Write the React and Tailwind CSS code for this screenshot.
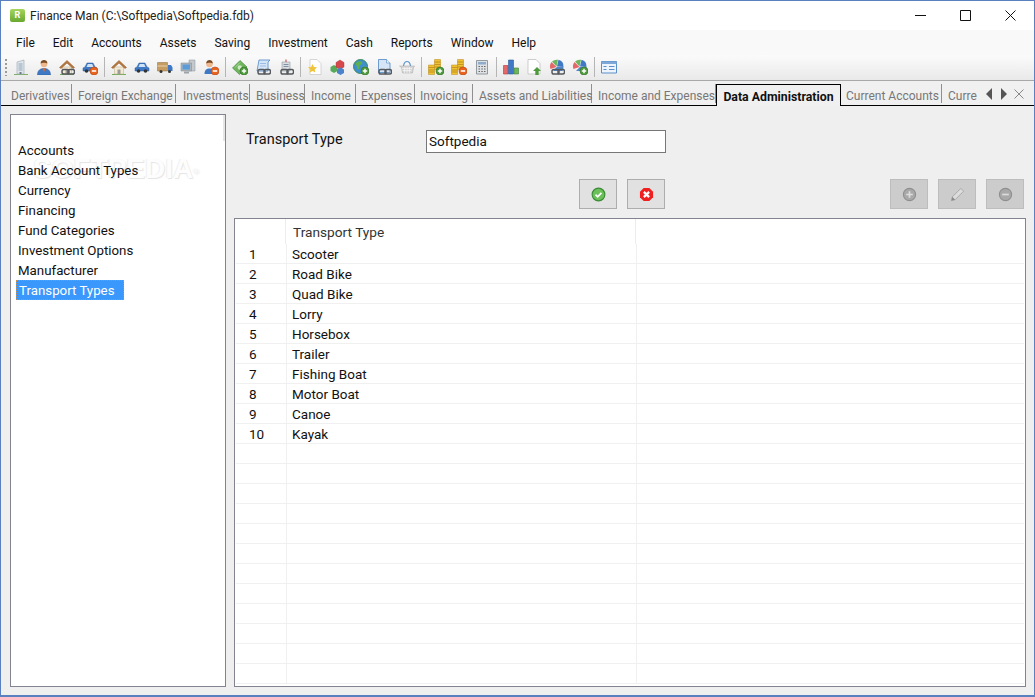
const uiFont = "font-['Roboto',sans-serif]";

const Plus = () => (
  <g>
    <circle cx="12" cy="12" r="4" fill="#4f9a3c" stroke="#2f6f25" strokeWidth="0.6" />
    <path d="M12 9.8v4.4M9.8 12h4.4" stroke="#fff" strokeWidth="1.4" />
  </g>
)

const Minus = () => (
  <g>
    <circle cx="12" cy="12" r="4" fill="#e8641f" stroke="#b84510" strokeWidth="0.6" />
    <path d="M9.8 12h4.4" stroke="#fff" strokeWidth="1.6" />
  </g>
)

const Chain = () => (
  <g fill="none" stroke="#55595e" strokeWidth="1.5">
    <rect x="3" y="10.5" width="7" height="4.500" rx="1.800" />
    <rect x="9" y="10.5" width="6.500" height="4.500" rx="1.800" />
  </g>
)

const Building = () => (
  <g>
    <path d="M1 15h14v1H1z" fill="#7fb069" />
    <path d="M4 3l7-2v14H4z" fill="#dfe5ea" stroke="#98a4af" strokeWidth="0.6" />
    <path d="M5.5 5h4M5.5 7h4M5.5 9h4M5.5 11h4" stroke="#8fa6bd" />
    <path d="M6.5 13h2v2h-2z" fill="#6f7d8a" />
  </g>
)

const Person = () => (
  <g>
    <path d="M1.5 16c0-5 3-6.5 6.5-6.500s6.500 1.500 6.500 6.500z" fill="#3f78c4" stroke="#2c5a9a" strokeWidth="0.5" />
    <path d="M6.500 9.500L8 13l1.500-3.500z" fill="#e8641f" />
    <circle cx="8" cy="5" r="3.300" fill="#eeb78c" />
    <path d="M4.600 4.500C4.600 1.800 6.500 1 8 1s3.400.8 3.400 3.500C10 3.500 6 3.500 4.600 4.500z" fill="#7b4a22" />
  </g>
)

const SmallPerson = () => (
  <g>
    <path d="M1.500 15c0-4 2-5.500 5-5.500s5 1.500 5 5.500z" fill="#3f78c4" />
    <circle cx="6.500" cy="5" r="3.300" fill="#eeb78c" />
    <path d="M3.200 4.500C3.200 2 5 1 6.500 1s3.300 1 3.300 3.500C8.500 3.500 4.500 3.500 3.200 4.500z" fill="#7b4a22" />
  </g>
)

const House = () => (
  <g>
    <path d="M1 15h14v1H1z" fill="#74ad58" />
    <path d="M3.500 8v7h9V8z" fill="#f4ead2" stroke="#b8a888" strokeWidth="0.5" />
    <path d="M0.500 8.500L8 1.500l7.500 7-1.500 1L8 4 2 9.500z" fill="#b9783c" stroke="#8a5526" strokeWidth="0.5" />
    <path d="M6.500 10.500h3V15h-3z" fill="#9c9c9c" />
  </g>
)

const Car = () => (
  <g>
    <path d="M1 12V9l2-1 2-4h6l2 4 2 1v3z" fill="#3f78c4" stroke="#2c5a9a" strokeWidth="0.5" />
    <path d="M5.800 5h4.400l1.300 3H4.500z" fill="#cfe2f5" />
    <circle cx="4.500" cy="12" r="1.800" fill="#333" />
    <circle cx="11.500" cy="12" r="1.800" fill="#333" />
  </g>
)

const Truck = () => (
  <g>
    <path d="M0.500 3.500h10v8.500h-10z" fill="#c69c62" stroke="#8d6c3c" strokeWidth="0.5" />
    <path d="M0.500 7h10" stroke="#e9d3a8" />
    <path d="M11 6h3l1.500 2.500V12H11z" fill="#3f78c4" />
    <circle cx="4" cy="12.500" r="1.500" fill="#333" />
    <circle cx="12.500" cy="12.500" r="1.500" fill="#333" />
  </g>
)

const Computer = () => (
  <g>
    <path d="M9 1h6v11H9z" fill="#c4c9ce" stroke="#8d9399" strokeWidth="0.5" />
    <path d="M1 4h10.500v8H1z" fill="#aeb6bd" stroke="#7f868d" strokeWidth="0.5" />
    <path d="M2.500 5.500H10v5H2.500z" fill="#5b9bd8" />
    <path d="M4 12.500h5v2H4z" fill="#9ca3a9" />
  </g>
)

const Money = () => (
  <g>
    <path d="M0.500 9L8 1.500 15 8 7.500 15.500z" fill="#6eb55c" stroke="#3c8136" strokeWidth="0.6" />
    <circle cx="7.800" cy="8.500" r="2.200" fill="#cfe9c4" />
    <path d="M3 8.500l5-5" stroke="#a9dd98" />
  </g>
)

const Scroll = () => (
  <g>
    <path d="M4 1h11l-2 2v9H2z" fill="#d5e5f7" stroke="#4e86c6" strokeWidth="0.8" />
    <path d="M5 4.500h6M5 7h6" stroke="#9abde4" />
  </g>
)

const Printer = () => (
  <g>
    <path d="M7.500 0.500h1V3h-1z" fill="#c33" />
    <path d="M4 3h8v9H4z" fill="#d9dde1" stroke="#7e858c" strokeWidth="0.5" />
    <path d="M5.500 5.500h5M5.500 7.500h5" stroke="#7e92a8" />
  </g>
)

const DocStar = () => (
  <g>
    <path d="M3 0.500h7l4 4v11H3z" fill="#fff" stroke="#c5c5c5" strokeWidth="0.7" />
    <path d="M5.500 5l1.400 2.900 3.100.4-2.300 2.100.6 3.100-2.800-1.500-2.800 1.500.6-3.100L1 8.300l3.100-.4z" fill="#f0c43a" />
  </g>
)

const Cubes = () => (
  <g>
    <path d="M0.500 8L4 6l3.500 2v4L4 14l-3.500-2z" fill="#59a95a" />
    <path d="M6 3.500L10 1l4 2.500V8l-4 2.500L6 8z" fill="#d6484c" stroke="#a92f33" strokeWidth="0.4" />
    <path d="M7 10.500l3.500-2 3.500 2v3.500L10.500 16 7 14z" fill="#4a83c9" />
  </g>
)

const Globe = () => (
  <g>
    <circle cx="7.500" cy="7.500" r="7" fill="#3f8fd0" stroke="#3a8a56" strokeWidth="1" />
    <path d="M3 4c2-2 5-2 6-1s-1 3-2 3 0 3-1 4-2 0-2-2-2-2-1-4z" fill="#5cb14d" />
    <path d="M10 8l3-1v3l-2 2z" fill="#5cb14d" />
  </g>
)

const DocBlue = () => (
  <g>
    <path d="M2.500 0.500h8l3.500 3.500v9.500H2.500z" fill="#d5e5f7" stroke="#4e86c6" strokeWidth="0.8" />
    <path d="M10.500 0.500V4H14" fill="#f3f8fd" stroke="#4e86c6" strokeWidth="0.6" />
  </g>
)

const Basket = () => (
  <g>
    <path d="M4.500 7C5 3.500 6.500 2.500 8 2.500S11 3.500 11.500 7" fill="none" stroke="#5d93cf" strokeWidth="1.200" />
    <path d="M0.500 7h15l-1 1.500-1 5.500h-10l-1-5.500z" fill="#d6d6d6" stroke="#a4a4a4" strokeWidth="0.5" />
    <path d="M3 9.500h10M3.500 11.500h9M5.500 8v6M8 8v6M10.500 8v6" stroke="#f5f5f5" strokeWidth="0.7" />
  </g>
)

const Coins = () => (
  <g fill="#f0c232" stroke="#b9891a" strokeWidth="0.5">
    <path d="M6.500 0.500h6v2.500h-6zM6.500 3h6v2.500h-6zM6.500 5.500h6v2.500h-6zM6.500 8h6v2.500h-6z" />
    <path d="M0.500 6h6v2.500h-6zM0.500 8.500h6v2.500h-6zM0.500 11h6v2h-6zM0.500 13h6v2.500h-6z" />
  </g>
)

const Calc = () => (
  <g>
    <path d="M2.500 1.500h11v13.500h-11z" fill="#dfe2e5" stroke="#7e858c" strokeWidth="0.8" />
    <path d="M4 3h8v2.500H4z" fill="#8faccb" />
    <path d="M4.500 7.500h1.500M7.300 7.500h1.500M10 7.500h1.500M4.500 10h1.500M7.300 10h1.500M10 10h1.500M4.500 12.500h1.500M7.300 12.500h1.500M10 12.500h1.500" stroke="#666" />
  </g>
)

const Bars = () => (
  <g strokeWidth="0.6">
    <path d="M0.500 6.500h4.500V15H0.500z" fill="#e4686a" stroke="#b33" />
    <path d="M5.500 1h5v14h-5z" fill="#3f78c4" stroke="#2c5a9a" />
    <path d="M11 9h4.500v6H11z" fill="#6eb55c" stroke="#3c8136" />
  </g>
)

const DocUp = () => (
  <g>
    <path d="M2 0.500h8l4 4v10.500H2z" fill="#fff" stroke="#c0c0c0" strokeWidth="0.8" />
    <path d="M11 8l4 4h-2.300v4h-3.400v-4H7z" fill="#4f9a3c" />
  </g>
)

const Pie = () => (
  <g>
    <path d="M7.500 7.500L3 2.500A7 7 0 0 1 9 0.800z" fill="#6eb55c" />
    <path d="M8 7.500L9.500 0.800A7 7 0 0 1 14.500 8z" fill="#3f78c4" />
    <path d="M7.500 8L1.500 10A7 7 0 0 1 2.500 3z" fill="#e4686a" />
    <path d="M7.800 8h6.700a7 7 0 0 1-1 4H4z" fill="#4f86c8" />
  </g>
)

const FormIcon = () => (
  <g>
    <path d="M0.500 2.500h15v11.500H0.500z" fill="#eef4fb" stroke="#5b8fc9" />
    <path d="M0.500 2.500h15v2.500H0.500z" fill="#7fa8d8" />
    <path d="M2.500 7.500h3M2.500 10.500h3M8 7.500h5.500M8 10.500h5.500" stroke="#5b8fc9" />
  </g>
)

const toolbar = [
  [[Building]],
  [[Person]],
  [[House], [Chain]],
  [[Car], [Minus]],
  "sep",
  [[House]],
  [[Car]],
  [[Truck]],
  [[Computer]],
  [[SmallPerson], [Minus]],
  "sep",
  [[Money], [Plus]],
  [[Scroll], [Chain]],
  [[Printer], [Chain]],
  "sep",
  [[DocStar]],
  [[Cubes]],
  [[Globe], [Plus]],
  [[DocBlue], [Chain]],
  [[Basket]],
  "sep",
  [[Coins], [Plus]],
  [[Coins], [Minus]],
  [[Calc]],
  "sep",
  [[Bars]],
  [[DocUp]],
  [[Pie], [Chain]],
  [[Pie], [Plus]],
  "sep",
  [[FormIcon]],
]

const ToolbarIcon = ({ parts }) => (
  <div className="w-[23px] flex justify-center">
    <svg width="16" height="16" viewBox="0 0 16 16">
      {parts.map(([Part], i) => <Part key={i} />)}
    </svg>
  </div>
)

const menus = ["File", "Edit", "Accounts", "Assets", "Saving", "Investment", "Cash", "Reports", "Window", "Help"]

const tabs = [
  ["Derivatives", "w-[68px] pl-[7px]"],
  ["Foreign Exchange", "w-[104px] pl-[6px]"],
  ["Investments", "w-[74px] pl-[7px]"],
  ["Business", "w-[55px] pl-[6px]"],
  ["Income", "w-[51px] pl-[6px]"],
  ["Expenses", "w-[59px] pl-[5px]"],
  ["Invoicing", "w-[58px] pl-[5px]"],
  ["Assets and Liabilities", "w-[119px] pl-[6px]"],
  ["Income and Expenses", "w-[124px] pl-[6px]"],
]

const listItems = ["Accounts", "Bank Account Types", "Currency", "Financing", "Fund Categories", "Investment Options", "Manufacturer"]

const rows = ["Scooter", "Road Bike", "Quad Bike", "Lorry", "Horsebox", "Trailer", "Fishing Boat", "Motor Boat", "Canoe", "Kayak"]
const blankRows = Array.from({ length: 12 })

const ActionButton = ({ disabled, children }) => (
  <button className={`w-[38px] h-[30px] flex items-center justify-center border ${disabled ? "bg-[#cccccc] border-[#bdbdbd]" : "bg-[#e1e1e1] border-[#adadad]"}`}>
    <svg width="15" height="15" viewBox="0 0 16 16">{children}</svg>
  </button>
)

const GridRow = ({ num, name }) => (
  <div className="h-[20px] flex border-b border-[#f0f0f0] text-[13.500px] leading-[21px] text-[#111]">
    <div className="w-[51px] pl-[13px] border-r border-[#f0f0f0]">{num}</div>
    <div className="w-[350px] pl-[5px] border-r border-[#f0f0f0]">{name}</div>
  </div>
)

const App = () => {
  return (
    <div className={`${uiFont} w-[1035px] h-[697px] flex flex-col overflow-hidden bg-[#efefef] border-x border-b-2 border-t border-[#5a80c0] text-[#111]`}>
      {/* title bar */}
      <div className="h-[29px] shrink-0 bg-white flex items-center pl-[9px] pr-[18px]">
        <div className="w-[15px] h-[13px] rounded-[2px] bg-gradient-to-b from-[#a6d65a] to-[#69a82f] flex items-center justify-center text-[9px] font-bold leading-none text-white">R</div>
        <div className="ml-[5px] text-[12px] text-[#222]">Finance Man (C:\Softpedia\Softpedia.fdb)</div>
        <div className="ml-auto flex items-center gap-[34px]">
          <svg width="11" height="11" viewBox="0 0 11 11"><path d="M0 5.500h11" stroke="#111" /></svg>
          <svg width="11" height="11" viewBox="0 0 11 11"><path d="M.5.500h10v10H.5z" fill="none" stroke="#111" /></svg>
          <svg width="11" height="11" viewBox="0 0 11 11"><path d="M.5.500l10 10M10.500.500l-10 10" stroke="#111" /></svg>
        </div>
      </div>

      {/* menu */}
      <div className="h-[25px] shrink-0 bg-[#f9f9f9] flex items-center pl-[15px] pt-[1px] gap-[18px] text-[12px] text-[#111]">
        {menus.map(m => <div key={m}>{m}</div>)}
      </div>

      {/* toolbar */}
      <div className="h-[26px] shrink-0 bg-gradient-to-b from-[#fbfbfb] to-[#e9e9e9] border-b border-[#a8a8a8] flex items-center relative pl-[8px] pb-[1px]">
        <div className="absolute left-[4px] top-[4px] h-[17px] w-[2px] bg-[repeating-linear-gradient(to_bottom,#9a9a9a_0,#9a9a9a_2px,transparent_2px,transparent_4px)]" />
        {toolbar.map((t, i) => t === "sep"
          ? <div key={i} className="w-[6px] h-[20px] flex justify-center"><div className="w-px h-full bg-[#b5b5b5]" /></div>
          : <ToolbarIcon key={i} parts={t} />)}
      </div>

      {/* tabs */}
      <div className="h-[25px] shrink-0 bg-[#f0f0f0] border-b border-black flex items-end pl-[3px] text-[12px] text-[#777]">
        <div className="flex items-center h-[19px] mb-[2px]">
          {tabs.map(([t, w]) => (
            <div key={t} className={`${w} h-full border-r border-[#8f8f8f] whitespace-nowrap leading-[24px]`}>{t}</div>
          ))}
        </div>
        <div className="w-[125px] h-[22px] -mb-px bg-[#f0f0f0] border-x border-t border-black font-bold text-[12.300px] text-[#111] text-center leading-[24px] whitespace-nowrap">Data Administration</div>
        <div className="flex items-center h-[19px] mb-[2px]">
          <div className="w-[101px] pl-[5px] h-full border-r border-[#8f8f8f] whitespace-nowrap leading-[24px]">Current Accounts</div>
          <div className="w-[33px] pl-[6px] h-full whitespace-nowrap leading-[24px]">Curre</div>
        </div>
        <div className="ml-[10px] mb-[5px] flex items-center gap-[5px]">
          <svg width="9" height="12" viewBox="0 0 9 12"><path d="M7 0v12L1 6z" fill="#555" /></svg>
          <svg width="9" height="12" viewBox="0 0 9 12"><path d="M2 0v12l6-6z" fill="#555" /></svg>
          <svg width="10" height="10" viewBox="0 0 10 10" className="ml-[1px]"><path d="M.5.500l9 9M9.500.500l-9 9" stroke="#888" /></svg>
        </div>
      </div>

      {/* main */}
      <div className="flex-1 min-h-0 flex pl-[9px] pr-[8px] pt-[8px] pb-[8px] gap-[8px]">
        <div className="relative w-[216px] h-full border border-[#82858f] bg-white pt-[25px] pl-[7px] text-[13.300px] text-[#111]">
          <div className="absolute right-0 top-0 w-[2px] h-[26px] bg-[#e6e6e6]" />
          <div className="absolute left-[22px] top-[40px] text-[28px] leading-none font-bold font-['Liberation_Sans',sans-serif] text-[#fdfdfd] [text-shadow:1px_1px_1px_#e4e4e4,-1px_0_1px_#efefef] select-none">SOFTPEDIA<sup className="text-[8px]">®</sup></div>
          <div className="relative">
            {listItems.map(l => <div key={l} className="h-[20px] leading-[21px]">{l}</div>)}
            <div className="w-[108px] -ml-[2px] h-[20px] pl-[2px] bg-[#3a97fb] text-white border border-dotted border-[#c98a4a] leading-[19px]">Transport Types</div>
          </div>
        </div>

        <div className="flex-1 min-w-0 h-full flex flex-col">
          <div className="h-[104px] shrink-0 relative">
            <div className="flex items-start pt-[16px]">
              <div className="w-[180px] ml-[12px] text-[14.500px] leading-[19px]">Transport Type</div>
              <div className="w-[240px] h-[23px] border border-[#777] bg-white pl-[2px] text-[13.500px] leading-[20px]">Softpedia</div>
            </div>
            <div className="flex mt-[26px] pl-[345px] gap-[10px]">
              <ActionButton>
                <circle cx="8" cy="8" r="6.800" fill="#6cc05a" stroke="#3a8a36" strokeWidth="1.200" />
                <path d="M4.800 8.200l2.300 2.300 4-4.300" fill="none" stroke="#fff" strokeWidth="1.800" />
              </ActionButton>
              <ActionButton>
                <path d="M5 1h6l4 4v6l-4 4H5l-4-4V5z" fill="#ef2020" />
                <path d="M5.200 5.200l5.600 5.600M10.800 5.200l-5.600 5.600" stroke="#fff" strokeWidth="2.400" />
              </ActionButton>
              <div className="ml-auto flex gap-[10px] pr-[2px]">
                <ActionButton disabled>
                  <circle cx="8" cy="8" r="6.500" fill="#a9a9a9" stroke="#8f8f8f" strokeWidth="1.200" />
                  <path d="M8 4.500v7M4.500 8h7" stroke="#ddd" strokeWidth="1.800" />
                </ActionButton>
                <ActionButton disabled>
                  <path d="M1.500 14.500l1-4L11.500 1.500l3 3-9 9z" fill="#dcdcdc" stroke="#9c9c9c" strokeWidth="0.800" />
                  <path d="M1.500 14.500l1-4 3 3z" fill="#8a8a8a" />
                </ActionButton>
                <ActionButton disabled>
                  <circle cx="8" cy="8" r="6.500" fill="#a9a9a9" stroke="#8f8f8f" strokeWidth="1.200" />
                  <path d="M4.500 8h7" stroke="#ddd" strokeWidth="1.800" />
                </ActionButton>
              </div>
            </div>
          </div>

          <div className="flex-1 min-h-0 overflow-hidden border border-[#82858f] bg-white px-px">
            <div className="h-[25px] flex text-[13.700px] leading-[26px] text-[#333]">
              <div className="w-[50px] border-r border-[#ececec]" />
              <div className="w-[350px] pl-[7px] border-r border-[#ececec]">Transport Type</div>
            </div>
            {rows.map((r, i) => <GridRow key={r} num={i + 1} name={r} />)}
            {blankRows.map((_, i) => <GridRow key={i} />)}
          </div>
        </div>
      </div>
    </div>
  )
}

export default App;
